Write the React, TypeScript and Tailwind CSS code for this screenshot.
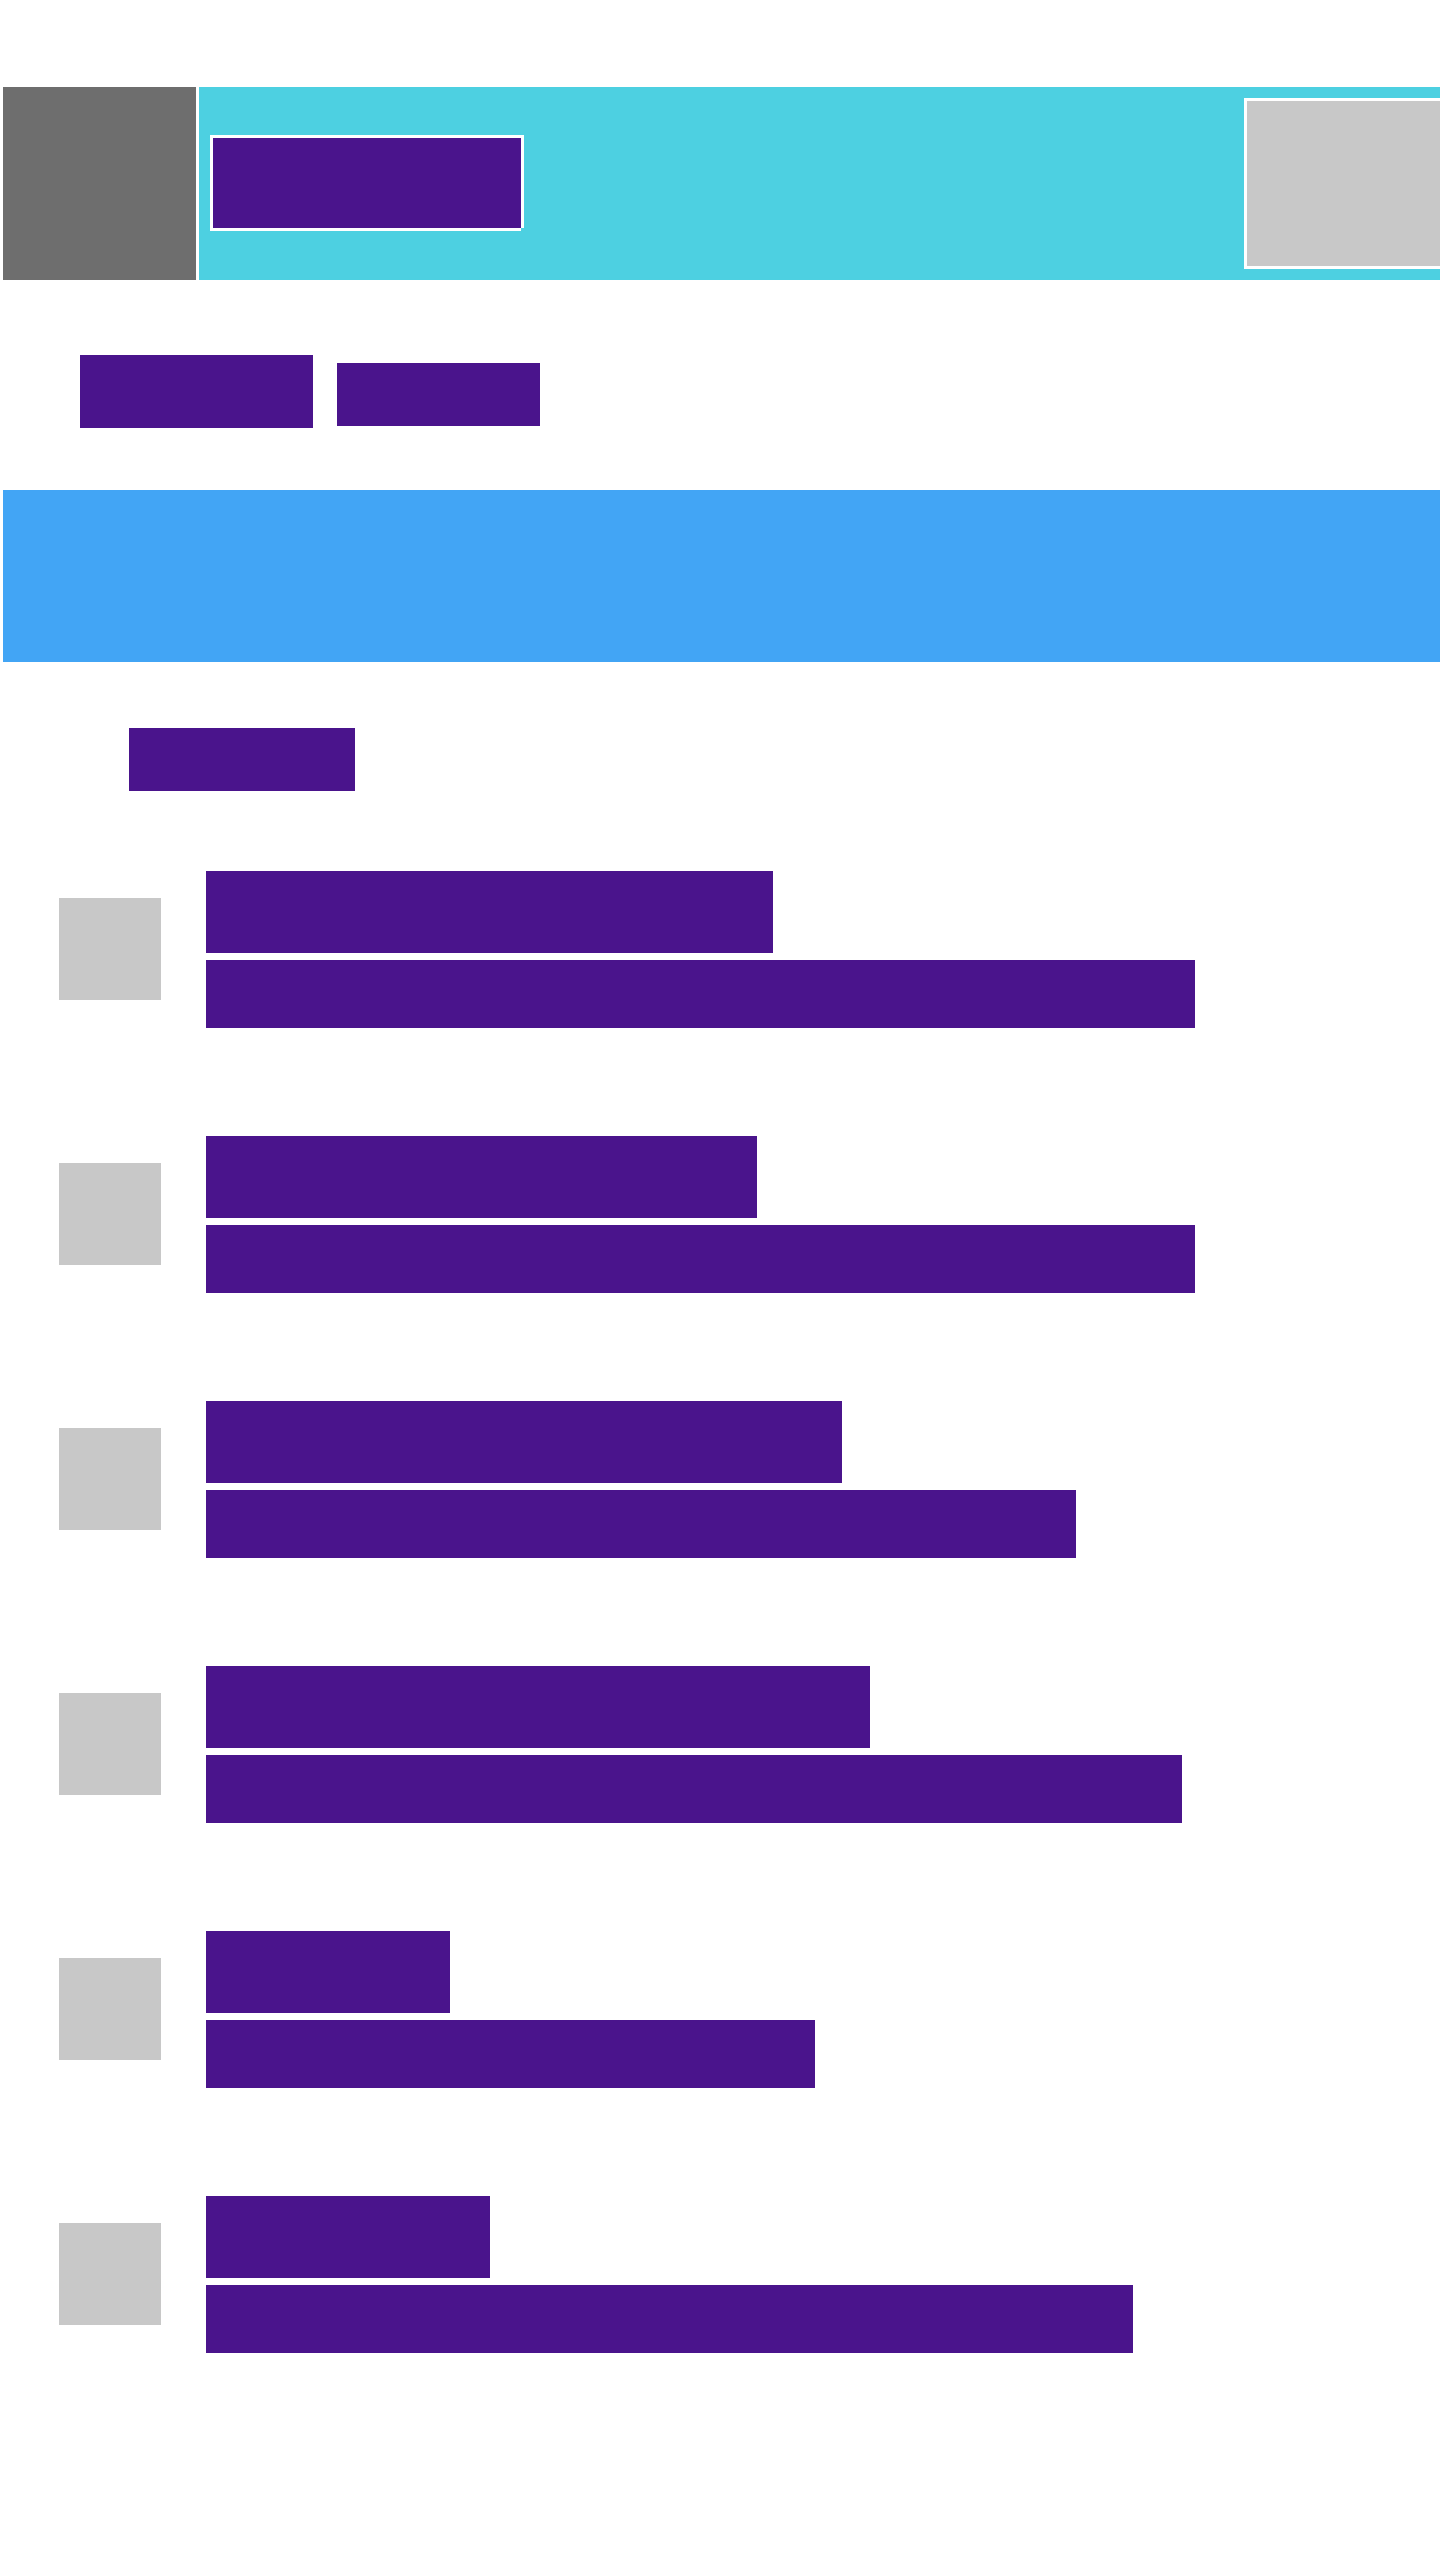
type Item = { title: string; subtitle: string };

const items: Item[] = [
  { title: "w-[567px]", subtitle: "w-[989px]" },
  { title: "w-[551px]", subtitle: "w-[989px]" },
  { title: "w-[636px]", subtitle: "w-[870px]" },
  { title: "w-[664px]", subtitle: "w-[976px]" },
  { title: "w-[244px]", subtitle: "w-[609px]" },
  { title: "w-[284px]", subtitle: "w-[927px]" },
];

function TextBlock({ className }: { className: string }) {
  return <div className={`max-w-full bg-[#4a148c] ${className}`} />;
}

function AppBar() {
  return (
    <header className="flex h-[193px] gap-[3px]">
      <div className="w-[193px] shrink-0 bg-[#6e6e6e]" />
      <div className="flex min-w-0 flex-1 items-start justify-between bg-[#4dd0e1] pt-[11px] pl-[11px]">
        <div className="relative mt-[37px] border-[3px] border-white">
          <TextBlock className="h-[90px] w-[308px]" />
          {/* Notch in the outline's lower right corner */}
          <span className="absolute -right-[3px] -bottom-[3px] size-[3px] bg-[#4dd0e1]" />
        </div>
        <div className="h-[171px] w-[196px] shrink-0 border-y-[3px] border-l-[3px] border-white bg-[#c8c8c8]" />
      </div>
    </header>
  );
}

function ListRow({ title, subtitle }: Item) {
  return (
    <li className="flex items-start gap-[45px]">
      <div className="mt-[27px] size-[102px] shrink-0 bg-[#c8c8c8]" />
      <div className="flex min-w-0 flex-1 flex-col gap-[7px]">
        <TextBlock className={`h-[82px] ${title}`} />
        <TextBlock className={`h-[68px] ${subtitle}`} />
      </div>
    </li>
  );
}

export default function App() {
  return (
    <div className="min-h-screen bg-white pt-[87px] pb-24 pl-[3px]">
      <AppBar />
      <nav className="flex items-start gap-6 pt-[75px] pb-[62px] pl-[77px]">
        <TextBlock className="h-[73px] w-[233px]" />
        <TextBlock className="mt-2 h-[63px] w-[203px]" />
      </nav>
      <main>
        <div className="h-[172px] bg-[#42a5f5]" />
        <div className="pt-[66px] pl-[126px]">
          <TextBlock className="h-[63px] w-[226px]" />
        </div>
        <ul className="flex flex-col gap-[108px] pt-20 pl-14">
          {items.map((item, index) => (
            <ListRow key={index} {...item} />
          ))}
        </ul>
      </main>
    </div>
  );
}
